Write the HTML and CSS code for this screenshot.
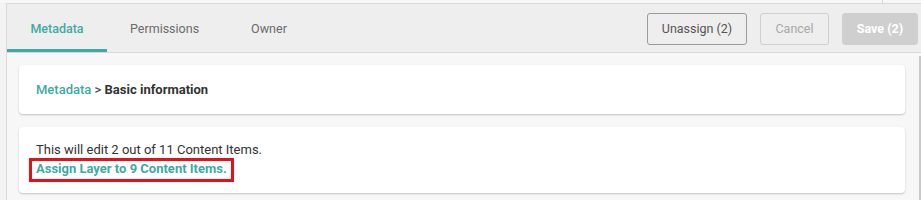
FILE: index.html
```html
<!DOCTYPE html>
<html>
<head>
<meta charset="utf-8">
<link rel="stylesheet" href="styles.css">
</head>
<body>
<div class="top-strip"><div class="top-fill"></div><div class="top-divider"></div></div>
<div class="frame">
  <div class="header">
    <div class="tabs">
      <div class="tab active">Metadata</div>
      <div class="tab tab-mid">Permissions</div>
      <div class="tab tab-last">Owner</div>
    </div>
    <div class="actions">
      <button class="btn btn-outline">Unassign (2)</button>
      <button class="btn btn-disabled">Cancel</button>
      <button class="btn btn-save">Save (2)</button>
    </div>
  </div>
  <div class="body-row">
    <div class="content">
      <div class="card card-crumb">
        <div class="crumb"><span class="crumb-link">Metadata</span> <span class="crumb-sep">&gt;</span> <span class="crumb-current">Basic information</span></div>
      </div>
      <div class="card card-info">
        <div class="info-line">This will edit 2 out of 11 Content Items.</div>
        <div class="highlight"><span class="assign-link">Assign Layer to 9 Content Items.</span></div>
      </div>
    </div>
    <div class="scroll-track"></div>
  </div>
</div>
</body>
</html>
```
FILE: styles.css
```css
* { box-sizing: border-box; }
html, body { margin: 0; padding: 0; }
body {
  background: #f3f3f3;
  font-family: Roboto, "Liberation Sans", Arial, sans-serif;
  font-size: 13px;
  color: #333;
  height: 200px;
  overflow: hidden;
}
.top-strip {
  height: 3px;
  display: flex;
  background: #f7f7f7;
}
.top-fill { flex: 1; }
.top-divider {
  width: 1px;
  background: #d6d6d6;
  margin-right: 38px;
}
.frame {
  margin-left: 6px;
  border-left: 1px solid #dadada;
  border-top: 1px solid #dadada;
  background: #f7f7f7;
  height: 197px;
}
.header {
  height: 49px;
  background: #eeeeee;
  border-bottom: 1px solid #d8d8d8;
  display: flex;
  justify-content: space-between;
  align-items: stretch;
  padding-right: 3px;
}
.tabs { display: flex; }
.tab {
  display: flex;
  align-items: center;
  color: #6b6b6b;
  font-weight: 400;
  font-size: 12.5px;
}
.tab.active {
  width: 100px;
  justify-content: center;
  color: #3eaaa4;
  font-weight: 500;
  box-shadow: inset 0 -3px 0 #3eaaa4;
}
.tab-mid { padding: 0 26px 0 23px; }
.tab-last { padding: 0 24px 0 26px; }
.actions {
  display: flex;
  align-items: center;
  gap: 13px;
  padding-top: 1px;
}
.btn {
  height: 32px;
  font-family: Roboto, "Liberation Sans", Arial, sans-serif;
  font-size: 12.5px;
  font-weight: 400;
  border-radius: 3px;
  padding: 0;
  background: #eeeeee;
  cursor: default;
}
.btn-outline {
  border: 1px solid #9a9a9a;
  color: #555;
  width: 100px;
}
.btn-disabled {
  border: 1px solid #cfcfcf;
  color: #a8a8a8;
  width: 69px;
}
.btn-save {
  border: 1px solid #cfcfcf;
  background: #cfcfcf;
  color: #ffffff;
  font-weight: 700;
  width: 76px;
}
.body-row {
  display: flex;
}
.content {
  flex: 1;
  padding: 12px 14px 0 12px;
  display: flex;
  flex-direction: column;
  gap: 13px;
}
.scroll-track {
  width: 2px;
  margin-top: 3px;
  height: 150px;
  background: #c9c9c9;
}
.card {
  background: #ffffff;
  border-radius: 4px;
  box-shadow: 0 1px 2px rgba(0, 0, 0, 0.22);
  padding-left: 17px;
}
.card-crumb {
  height: 49px;
  display: flex;
  align-items: center;
}
.crumb { white-space: pre; }
.crumb-link { color: #3eaaa4; font-weight: 500; }
.crumb-sep { color: #555; font-weight: 500; }
.crumb-current { color: #333; font-weight: 700; }
.card-info {
  height: 66px;
  padding-top: 15px;
  padding-left: 10px;
}
.info-line {
  line-height: 16px;
  padding-left: 7px;
  color: #333;
}
.highlight {
  display: inline-block;
  border: 3px solid #e2121c;
  padding: 0 4px 3px 4px;
  line-height: 15px;
}
.assign-link {
  color: #3eaaa4;
  font-weight: 700;
}
```
